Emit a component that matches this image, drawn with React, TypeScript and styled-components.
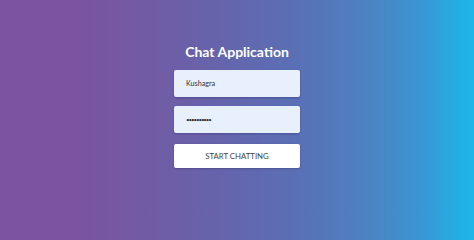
import React from "react";
import styled, { createGlobalStyle } from "styled-components";

const bg = `linear-gradient(
    to right,
    #7a549e 0%,
    #7a549e 18%,
    #6763ab 45%,
    #5a6fb5 62%,
    #4f80c0 76%,
    #3b94d2 88%,
    #1bb8ea 100%
  )`;

const GlobalStyle = createGlobalStyle`
  html, body {
    margin: 0;
    padding: 0;
  }
  body {
    font-family: Lato, "Open Sans", sans-serif;
    background: ${bg};
  }
`;

const Page = styled.div`
  width: 100%;
  height: 213px;
  display: flex;
  align-items: center;
  justify-content: center;
  background: ${bg};
`;

const Form = styled.form`
  width: 126px;
  display: flex;
  flex-direction: column;
  align-items: stretch;
  margin-bottom: 2px;
`;

const Title = styled.h1`
  margin: 0 -40px 10px;
  text-align: center;
  color: #ffffff;
  font-family: Lato, "Open Sans", sans-serif;
  font-size: 14px;
  font-weight: 700;
  line-height: 17px;
`;

const Field = styled.input<{ $secret?: boolean }>`
  box-sizing: border-box;
  height: 27px;
  margin-bottom: 9px;
  padding: 0 12px;
  border: none;
  border-radius: 2px;
  background: #e8f0fe;
  color: #333;
  font-family: Lato, "Open Sans", sans-serif;
  font-size: ${(p) => (p.$secret ? "6px" : "7.2px")};
  letter-spacing: ${(p) => (p.$secret ? "-1px" : "0")};
  box-shadow: 0 1px 2px rgba(40, 40, 90, 0.35);
  outline: none;
`;

const Submit = styled.button`
  box-sizing: border-box;
  height: 24px;
  margin-top: 2px;
  border: none;
  border-radius: 2px;
  background: #ffffff;
  color: #444;
  font-family: Lato, "Open Sans", sans-serif;
  font-size: 7.8px;
  box-shadow: 0 1px 2px rgba(40, 40, 90, 0.35);
  cursor: pointer;
`;

export default function App() {
  return (
    <>
      <GlobalStyle />
      <Page>
        <Form onSubmit={(e) => e.preventDefault()}>
          <Title>Chat Application</Title>
          <Field type="text" defaultValue="Kushagra" />
          <Field type="password" defaultValue="kushagra12" $secret />
          <Submit type="submit">START CHATTING</Submit>
        </Form>
      </Page>
    </>
  );
}
